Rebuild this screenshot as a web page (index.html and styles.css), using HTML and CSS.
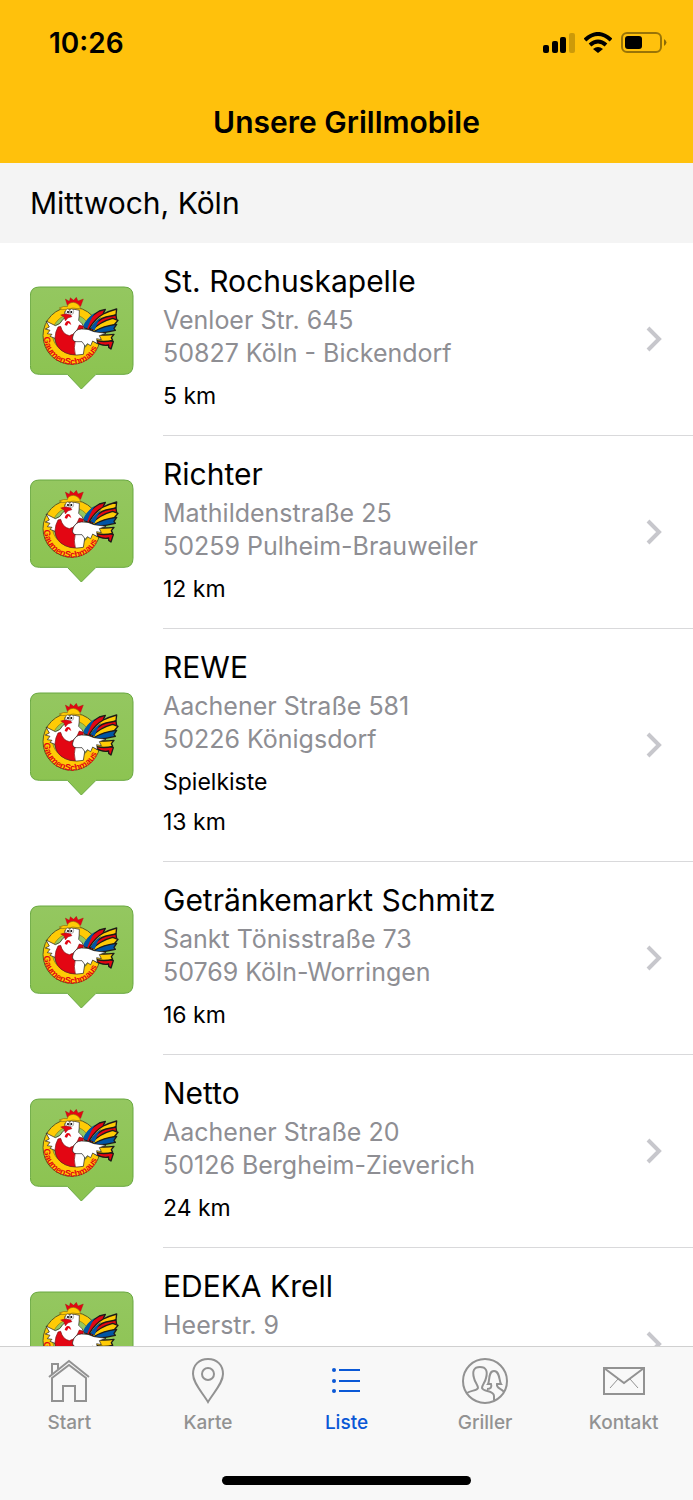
FILE: index.html
```html
<!DOCTYPE html>
<html lang="de">
<head>
    <meta charset="UTF-8">
    <meta name="viewport" content="width=device-width, initial-scale=1.0">
    <title>Unsere Grillmobile</title>
    <link rel="stylesheet" href="styles.css">
</head>
<body>
    <svg class="sprite" aria-hidden="true">
        <linearGradient id="pinFill" x1="0" y1="0" x2="0" y2="1">
            <stop offset="0" stop-color="#94c760"/>
            <stop offset="1" stop-color="#8bc34f"/>
        </linearGradient>
        <path id="badgeArc" d="M72 172A83 83 0 0 0 238 172" fill="none"/>
    </svg>

    <div class="app">
        <header class="header">
            <div class="status-bar">
                <span class="time">10:26</span>
                <div class="status-icons">
                    <svg width="32" height="20" viewBox="0 0 32 20">
                        <rect x="0" y="12" width="6" height="8" rx="2"/>
                        <rect x="9" y="8" width="6" height="12" rx="2"/>
                        <rect x="17" y="4" width="6" height="16" rx="2"/>
                        <rect x="26" y="0" width="6" height="20" rx="2" opacity=".2"/>
                    </svg>
                    <svg width="28" height="22" viewBox="0 0 28 22">
                        <path d="M1 8Q14-4 27 8" fill="none" stroke="#000" stroke-width="4"/>
                        <path d="M6 13Q14 6 22 13" fill="none" stroke="#000" stroke-width="4"/>
                        <path d="M9 17Q14 13 19 17L14 21Z"/>
                    </svg>
                    <svg width="46" height="22" viewBox="0 0 46 22">
                        <rect x="1" y="1" width="39" height="19" rx="5" fill="none" stroke="#000" stroke-width="2" opacity=".4"/>
                        <rect x="4" y="4" width="17" height="13" rx="3"/>
                        <path d="M43 7Q48 10.500 43 14Z" opacity=".45"/>
                    </svg>
                </div>
            </div>
            <h1>Unsere Grillmobile</h1>
        </header>

        <h2 class="section-title">Mittwoch, Köln</h2>

        <main class="list" id="list"></main>

        <nav class="tab-bar">
            <div class="tabs">
                <a class="tab" href="#">
                    <svg viewBox="0 0 46 46">
                        <path d="M3 19L23 3L43 19M6 20L23 7L40 20V43H29V28H17V43H6ZM6 16V6H12V11"/>
                    </svg>
                    Start
                </a>
                <a class="tab" href="#">
                    <svg viewBox="0 0 46 46">
                        <path d="M23 44C17 34 8 25 8 16C8 7 14 1 23 1S38 7 38 16C38 25 29 34 23 44Z"/>
                        <circle cx="23" cy="16" r="6"/>
                    </svg>
                    Karte
                </a>
                <a class="tab active" href="#">
                    <svg viewBox="0 0 46 46">
                        <path d="M16 12H37M16 23H37M16 33H37"/>
                        <g fill="currentColor" stroke="none">
                            <circle cx="11" cy="12" r="2"/>
                            <circle cx="11" cy="23" r="2"/>
                            <circle cx="11" cy="33" r="2"/>
                        </g>
                    </svg>
                    Liste
                </a>
                <a class="tab" href="#">
                    <svg viewBox="0 0 46 46">
                        <circle cx="23" cy="23" r="22"/>
                        <path d="M5 35C9 32 15 33 16 30C16 27 13 25 12 20C10 13 12 9 18 9S26 13 24 20C23 25 20 27 20 30C21 34 32 32 32 38V42M25 31C29 31 30 29 29 26H26C28 23 26 13 32 13S37 23 39 26H35C34 31 40 30 42 34"/>
                    </svg>
                    Griller
                </a>
                <a class="tab" href="#">
                    <svg viewBox="0 0 46 46">
                        <path d="M3 10H43V36H3ZM3 10L23 25L43 10"/>
                        <path d="M17 21L9 30M29 21L37 30" stroke-width="1"/>
                    </svg>
                    Kontakt
                </a>
            </div>
            <div class="home-indicator"></div>
        </nav>
    </div>

    <script>
        const places = [
            { name: 'St. Rochuskapelle', address: ['Venloer Str. 645', '50827 Köln - Bickendorf'], details: ['5 km'] },
            { name: 'Richter', address: ['Mathildenstraße 25', '50259 Pulheim-Brauweiler'], details: ['12 km'] },
            { name: 'REWE', address: ['Aachener Straße 581', '50226 Königsdorf'], details: ['Spielkiste', '13 km'] },
            { name: 'Getränkemarkt Schmitz', address: ['Sankt Tönisstraße 73', '50769 Köln-Worringen'], details: ['16 km'] },
            { name: 'Netto', address: ['Aachener Straße 20', '50126 Bergheim-Zieverich'], details: ['24 km'] },
            { name: 'EDEKA Krell', address: ['Heerstr. 9'], details: [] }
        ];

        const pin = `
            <svg class="pin" viewBox="30 19 312 324">
                <path d="M58 22H312Q339 22 339 49V257Q339 284 312 284H228L184 328L142 284H58Q31 284 31 257V49Q31 22 58 22Z" fill="url(#pinFill)" stroke="#69a840" stroke-width="3"/>
                <circle cx="155" cy="168" r="86" fill="#ffcb05" stroke="#5c5a20" stroke-width="3"/>
                <circle cx="155" cy="162" r="58" fill="#94c760" stroke="#8a7a10" stroke-width="2"/>
                <!-- tail -->
                <g stroke="#1d1a17" stroke-width="4" stroke-linejoin="round">
                    <path d="M192 142Q206 112 238 94L256 89L250 101L258 102Q234 122 216 158Z" fill="#e30613"/>
                    <path d="M208 146Q226 116 250 103Q268 94 290 88L288 105L279 110Q246 124 224 156Z" fill="#ffcb05"/>
                    <path d="M210 150Q234 118 258 112L288 106L290 120L280 126Q250 134 226 158Z" fill="#e30613"/>
                    <path d="M216 152Q240 126 278 116L294 122L282 136Q254 144 228 160Z" fill="#ffcb05"/>
                    <path d="M222 156Q250 138 290 134L282 146L286 152Q256 160 228 160Z" fill="#0055a5"/>
                    <path d="M228 178Q250 174 280 186L273 208L266 203L266 196Q246 200 224 186Z" fill="#e30613"/>
                    <path d="M226 164Q248 168 282 164L274 174L278 182Q248 190 218 180Z" fill="#ffcb05"/>
                </g>
                <path d="M188 142Q200 114 224 100Q210 122 202 146ZM212 146Q222 124 244 112Q232 126 224 152Z" fill="#0055a5"/>
                <!-- body -->
                <path d="M134 96Q150 84 178 92Q178 112 176 122Q188 130 194 148L200 160L190 224Q150 232 122 210Q106 194 105 176L90 170L96 164L82 162L90 152L76 148L88 142L78 124L106 138Q122 134 128 120L136 114Z" fill="#fff" stroke="#1d1a17" stroke-width="2" stroke-linejoin="round"/>
                <path d="M114 142Q106 156 105 174Q106 204 134 218Q150 226 166 225Q160 204 166 184L188 178L190 140L178 136Q168 164 148 168Q128 164 122 140Z" fill="#e30613" stroke="#7a1010" stroke-width="2"/>
                <!-- wing -->
                <path d="M158 172Q164 148 184 148Q204 146 222 156L258 161L238 168L244 180L230 177L232 192L218 184L212 198L202 192L196 200L186 186L168 186Q156 184 158 172Z" fill="#fff" stroke="#1d1a17" stroke-width="2" stroke-linejoin="round"/>
                <!-- head -->
                <path d="M142 77L136 58L148 65L151 54L161 62L169 53L174 64L190 58L182 80Q164 70 142 77Z" fill="#e30613" stroke="#9b1010" stroke-width="1"/>
                <path d="M118 85Q132 78 142 81Q144 69 160 68Q178 70 182 88Q158 82 138 89Q126 92 118 85Z" fill="#ffcb05" stroke="#8a6b10" stroke-width="2"/>
                <ellipse cx="143" cy="96" rx="6" ry="8" fill="#fff" stroke="#1d1a17"/>
                <ellipse cx="155" cy="96" rx="6" ry="8" fill="#fff" stroke="#1d1a17"/>
                <circle cx="144" cy="97" r="3" fill="#000"/>
                <circle cx="154" cy="97" r="3" fill="#000"/>
                <path d="M122 106Q134 100 152 105L156 111L144 115L136 124L132 112Z" fill="#e30613" stroke="#7a1010"/>
                <path d="M134 136Q138 120 150 126L154 136L145 130L141 138Z" fill="#e30613"/>
                <text class="badge-text"><textPath href="#badgeArc">GaumenSchmaus</textPath></text>
            </svg>`;

        document.getElementById('list').innerHTML = places.map(place => `
            <a class="row" href="#">
                ${pin}
                <div class="row-body">
                    <div class="info">
                        <h3>${place.name}</h3>
                        <p class="address">${place.address.join('<br>')}</p>
                        ${place.details.map(detail => `<p class="detail">${detail}</p>`).join('')}
                    </div>
                    <svg class="chevron" viewBox="0 0 18 28"><path d="M3 3L14 14L3 25"/></svg>
                </div>
            </a>`).join('');
    </script>
</body>
</html>
```
FILE: styles.css
```css
* {
    margin: 0;
    padding: 0;
    box-sizing: border-box;
}
body {
    font-family: Inter, sans-serif;
    color: #000;
    background: #fff;
}
a {
    color: inherit;
    text-decoration: none;
}
.sprite {
    position: absolute;
    width: 0;
    height: 0;
}
.app {
    display: flex;
    flex-direction: column;
    height: 100vh;
}
.header {
    background: #ffc10c;
    padding-bottom: 21px;
}
.status-bar {
    display: flex;
    justify-content: space-between;
    align-items: center;
    height: 86px;
    padding: 0 26px 0 49px;
}
.time {
    font-size: 28px;
    font-weight: 600;
}
.status-icons {
    display: flex;
    align-items: center;
    gap: 9px;
}
h1 {
    margin-top: 16px;
    font-size: 30px;
    font-weight: 600;
    line-height: 40px;
    text-align: center;
}
.section-title {
    padding: 20px 30px;
    background: #f4f4f4;
    font-size: 30px;
    font-weight: 400;
    line-height: 40px;
}
.list {
    flex: 1;
    min-height: 0;
    overflow-y: auto;
    scrollbar-width: none;
}
.row {
    display: flex;
    align-items: center;
    gap: 29px;
    padding-left: 30px;
}
.pin {
    flex: none;
    width: 104px;
    height: 108px;
}
.badge-text {
    font-family: "Liberation Sans", sans-serif;
    font-size: 27px;
    font-weight: 700;
    fill: #e30613;
}
.row-body {
    flex: 1;
    display: flex;
    align-items: center;
    min-height: 193px;
    padding-right: 30px;
    border-bottom: 1px solid #d9d9db;
}
.info {
    flex: 1;
    align-self: flex-start;
    padding: 19px 0 25px;
}
h3 {
    font-size: 30px;
    font-weight: 400;
    line-height: 38px;
}
.address {
    margin-top: 4px;
    color: #8e8e93;
    font-size: 25px;
    line-height: 33px;
}
.detail {
    margin-top: 12px;
    font-size: 23px;
    line-height: 28px;
}
.chevron {
    flex: none;
    width: 18px;
    height: 28px;
    fill: none;
    stroke: #c7c7cc;
    stroke-width: 4;
}
.tab-bar {
    background: #f8f8f8;
    border-top: 1px solid #d0d0d0;
    padding-bottom: 15px;
}
.tabs {
    display: flex;
    padding: 11px 0 41px;
}
.tab {
    flex: 1;
    display: flex;
    flex-direction: column;
    align-items: center;
    gap: 7px;
    color: #929292;
    font-size: 19px;
    font-weight: 500;
    line-height: 24px;
}
.tab.active {
    color: #0a58d6;
}
.tab svg {
    width: 46px;
    height: 46px;
    fill: none;
    stroke: currentColor;
    stroke-width: 2;
}
.home-indicator {
    width: 36%;
    height: 9px;
    margin: 0 auto;
    border-radius: 5px;
    background: #000;
}
```
